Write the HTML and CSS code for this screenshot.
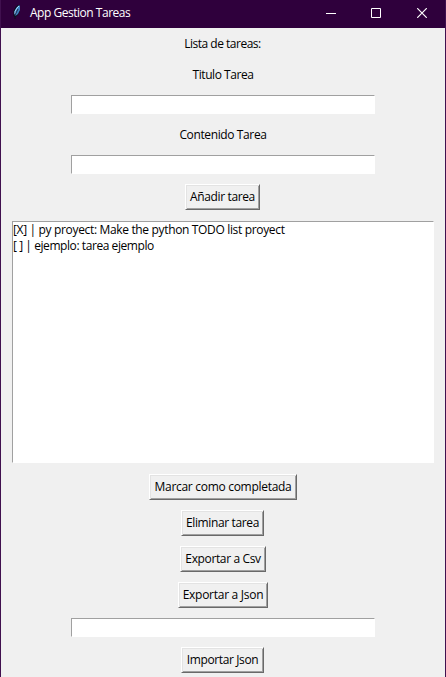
FILE: index.html
```html
<!DOCTYPE html>
<html lang="es">
<head>
<meta charset="utf-8">
<title>App Gestion Tareas</title>
<link rel="stylesheet" href="styles.css">
</head>
<body>
<div class="window">
  <header class="titlebar">
    <svg class="feather" width="10" height="16" viewBox="0 0 10 16">
      <path d="M1.5 12V7L3.5 3L6 1H8V7L6 11L3.5 13V15H2.5V13Z" fill="#0b0c18"/>
      <path d="M2.5 11V7L4.5 3.5L6.5 1.5H8V6L6 10L3.5 12Z" fill="#3f7fc0"/>
      <path d="M3 10V7.5L5 4L7 2" fill="none" stroke="#a5d8fa"/>
      <path d="M3 14V11L6 5" fill="none" stroke="#10182c" stroke-width=".8"/>
    </svg>
    <h1 class="title">App Gestion Tareas</h1>
    <div class="controls">
      <svg class="minimize" width="10" height="10" viewBox="0 0 10 10"><path d="M0 5.5H10" stroke="#fff"/></svg>
      <svg class="maximize" width="10" height="10" viewBox="0 0 10 10"><path d="M.5 .5H9.5V9.5H.5Z" fill="none" stroke="#fff"/></svg>
      <svg class="close" width="10" height="10" viewBox="0 0 10 10"><path d="M.2 .2L9.8 9.8M9.8 .2L.2 9.8" stroke="#fff" stroke-width="1.2"/></svg>
    </div>
  </header>
  <main class="content">
    <div class="label list-label">Lista de tareas:</div>
    <label class="label" for="titulo">Titulo Tarea</label>
    <input class="entry" id="titulo" type="text">
    <label class="label content-label" for="contenido">Contenido Tarea</label>
    <input class="entry" id="contenido" type="text">
    <button class="button add">Añadir tarea</button>
    <div class="listbox">
      <div class="item first">[X] | py proyect: Make the python TODO list proyect</div>
      <div class="item second">[ ] | ejemplo: tarea ejemplo</div>
    </div>
    <button class="button complete">Marcar como completada</button>
    <button class="button delete">Eliminar tarea</button>
    <button class="button csv">Exportar a Csv</button>
    <button class="button json">Exportar a Json</button>
    <input class="entry" type="text">
    <button class="button import">Importar Json</button>
  </main>
</div>
</body>
</html>
```
FILE: styles.css
```css
* { box-sizing: border-box; }
body {
  margin: 0;
  overflow: hidden;
  font: 12px/16px "Open Sans", "Noto Sans", sans-serif;
  letter-spacing: -0.37px;
  color: #000;
}
.window {
  height: 677px;
  border: solid #40104f;
  border-width: 0 1px;
  background: #f0f0f0;
}
.titlebar {
  display: flex;
  align-items: center;
  height: 28px;
  padding: 0 18px 3px 11px;
  background: #2f003c;
  color: #fff;
}
.feather { flex: none; margin-top: -1px; }
.title {
  margin: 0 0 0 8px;
  font: inherit;
  letter-spacing: -0.48px;
  white-space: nowrap;
}
.controls { display: flex; margin-left: auto; }
.controls svg { display: block; }
.maximize { margin: 0 36px 0 35px; }
.content {
  display: flex;
  flex-direction: column;
  align-items: center;
  gap: 10px;
  padding: 6px 11px 0;
}
.label {
  height: 20px;
  line-height: 20px;
  letter-spacing: -0.45px;
  white-space: nowrap;
}
.list-label { height: 21px; margin-right: 1px; letter-spacing: -0.5px; }
.content-label {
  height: 21px;
  padding-top: 1px;
  letter-spacing: -0.38px;
}
.entry {
  width: 304px;
  height: 19px;
  margin: 0;
  padding: 0 2px;
  border: 1px solid #fff;
  border-top-color: #a0a0a0;
  border-left-color: #a0a0a0;
  outline: 0;
  background: #fff;
}
.button {
  flex: none;
  height: 26px;
  padding: 0 0 1px;
  border: 1px solid;
  border-color: #fff #696969 #696969 #fff;
  background: #f0f0f0;
  box-shadow: inset 1px 1px #e3e3e3, inset -1px -1px #a0a0a0;
  font: inherit;
  letter-spacing: inherit;
  color: inherit;
  white-space: nowrap;
}
.add { width: 75px; margin-right: 1px; }
.complete { width: 148px; letter-spacing: -0.29px; }
.delete, .import { width: 83px; margin-right: 1px; }
.csv { width: 86px; }
.json { width: 90px; letter-spacing: -0.27px; }
.listbox {
  width: 422px;
  height: 242px;
  margin: 1px 0;
  border: 1px solid #fff;
  border-top-color: #a0a0a0;
  border-left-color: #a0a0a0;
  background: #fff;
}
.item { height: 16px; white-space: nowrap; }
.first { letter-spacing: -0.34px; }
.second { letter-spacing: -0.43px; }
```
